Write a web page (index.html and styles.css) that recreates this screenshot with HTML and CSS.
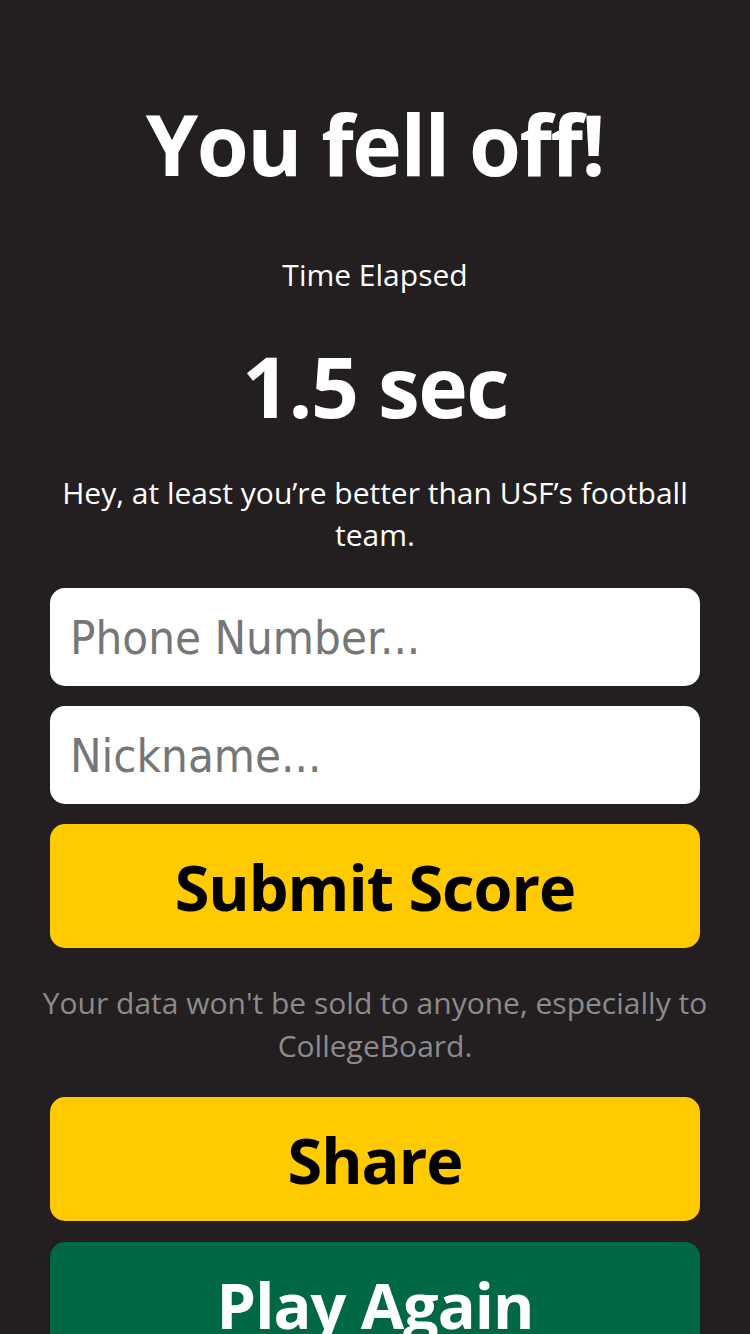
FILE: index.html
```html
<!DOCTYPE html>
<html>
<head>
<meta charset="utf-8">
<link rel="stylesheet" href="styles.css">
</head>
<body>
<main class="screen">
  <h1 class="title">You fell off!</h1>
  <p class="label">Time Elapsed</p>
  <p class="time">1.5 sec</p>
  <p class="quip">Hey, at least you’re better than USF’s football team.</p>
  <form class="form">
    <input class="field" type="text" placeholder="Phone Number...">
    <input class="field" type="text" placeholder="Nickname...">
    <button class="btn btn-gold" type="button">Submit Score</button>
  </form>
  <p class="note">Your data won't be sold to anyone, especially to CollegeBoard.</p>
  <div class="actions">
    <button class="btn btn-gold" type="button">Share</button>
    <button class="btn btn-green" type="button">Play Again</button>
  </div>
</main>
</body>
</html>
```
FILE: styles.css
```css
html, body {
  margin: 0;
  padding: 0;
  background: #231f20;
  height: 100%;
  overflow: hidden;
}
body {
  font-family: "Open Sans", "Noto Sans", sans-serif;
  color: #ffffff;
}
.screen {
  display: flex;
  flex-direction: column;
  align-items: center;
  padding: 0 50px;
  text-align: center;
}
.title {
  margin: 89px 0 0;
  font-size: 84px;
  line-height: 110px;
  font-weight: 700;
  letter-spacing: -1.5px;
}
.label {
  margin: 56px 0 0;
  font-size: 30px;
  line-height: 40px;
}
.time {
  margin: 41px 0 0;
  font-size: 84px;
  font-weight: 700;
  line-height: 100px;
  letter-spacing: -1.5px;
}
.quip {
  margin: 36px 0 0;
  font-size: 30px;
  line-height: 42px;
}
.form {
  margin-top: 32px;
  width: 100%;
  display: flex;
  flex-direction: column;
  gap: 20px;
}
.field {
  box-sizing: border-box;
  width: 100%;
  height: 98px;
  border: none;
  border-radius: 15px;
  background: #ffffff;
  padding: 0 20px;
  font-family: "DejaVu Sans Condensed", "DejaVu Sans", sans-serif;
  font-size: 47px;
  color: #222;
  outline: none;
}
.field::placeholder {
  color: #767676;
}
.btn {
  box-sizing: border-box;
  width: 100%;
  height: 124px;
  border: none;
  border-radius: 15px;
  font-family: "Open Sans", "Noto Sans", sans-serif;
  font-weight: 700;
  font-size: 63px;
  letter-spacing: -1px;
  cursor: pointer;
  padding: 0;
}
.btn-gold {
  background: #ffca00;
  color: #000;
}
.btn-green {
  background: #006747;
  color: #fff;
}
.note {
  margin: 33px -12px 0;
  font-size: 30px;
  line-height: 43px;
  color: #8c8a8b;
}
.actions {
  margin-top: 30px;
  width: 100%;
  display: flex;
  flex-direction: column;
  gap: 21px;
}
```
